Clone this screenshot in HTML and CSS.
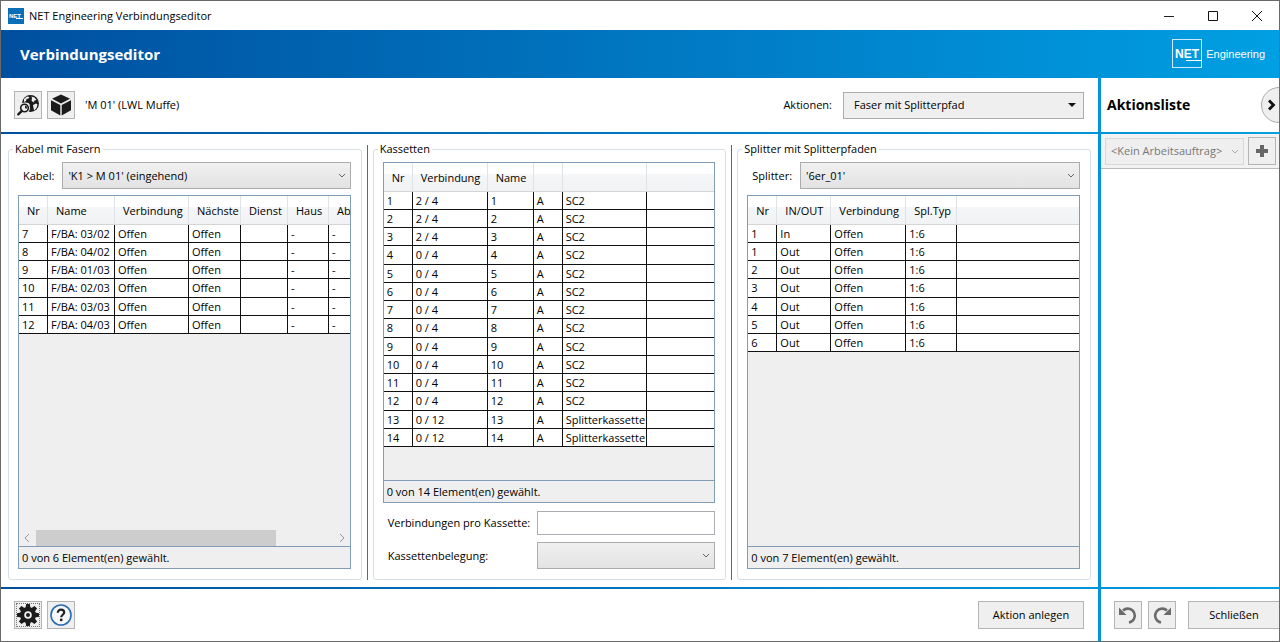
FILE: index.html
```html
<!DOCTYPE html>
<html lang="de">
<head>
  <meta charset="UTF-8" />
  <meta name="viewport" content="width=device-width, initial-scale=1.0" />
  <title>NET Engineering Verbindungseditor</title>
  <link rel="stylesheet" href="styles.css">
</head>
<body>
  <div class="titlebar">
    <svg class="app-icon" viewBox="0 0 16 16" width="16" height="16">
      <rect width="16" height="16" fill="#0a6fb8"/>
      <text x="1" y="10" class="app-icon-text">NET</text>
      <rect x="8" y="10" width="7" height="1" fill="#fff"/>
    </svg>
    <span class="titlebar-text">NET Engineering Verbindungseditor</span>
    <button class="window-button" aria-label="Minimieren">
      <svg viewBox="0 0 12 12" width="12" height="12"><path d="M1 6.5h10" stroke="#222" fill="none"/></svg>
    </button>
    <button class="window-button" aria-label="Maximieren">
      <svg viewBox="0 0 12 12" width="12" height="12"><path d="M1.5 1.5h9v9h-9z" stroke="#111" fill="none"/></svg>
    </button>
    <button class="window-button" aria-label="Fenster schließen">
      <svg viewBox="0 0 12 12" width="12" height="12"><path d="M1 1l10 10M11 1L1 11" stroke="#111" fill="none"/></svg>
    </button>
  </div>

  <header class="banner">
    <h1>Verbindungseditor</h1>
    <div class="brand">
      <svg viewBox="0 0 30 30" width="30" height="30">
        <rect x="0.5" y="0.5" width="29" height="28" fill="none" stroke="#cfeafa"/>
        <text x="3" y="19" class="brand-net">NET</text>
        <rect x="14" y="21" width="16" height="1" fill="#fff"/>
      </svg>
      <span>Engineering</span>
    </div>
  </header>

  <div class="workspace">
    <div class="toolbar">
      <button class="icon-button" aria-label="Lokalisieren">
        <svg viewBox="0 0 24 24" width="24" height="24">
          <circle cx="14.5" cy="10.5" r="8.5" fill="#1b1b1b"/>
          <path d="M8 6l3-2.500 2.500.5-1 1.500-2 .5-.5 2-2 1zM15.500 3.500l3 1 2 2.500-2 .5-1 2-2-2 .5-2zM9 9.500l3.500.5 1.500 2-1.500 2.500-2-1.500zM17 12l3-1.500 1.500 1-1 3.500-2.500 2.500z" fill="#efefef"/>
          <circle cx="8.500" cy="15" r="5.500" fill="#efefef"/>
          <circle cx="8.500" cy="15" r="3.800" fill="#efefef" stroke="#1b1b1b" stroke-width="1.600"/>
          <path d="M5.800 17.800L2.300 21.300" stroke="#1b1b1b" stroke-width="2.400" stroke-linecap="round"/>
          <path d="M9 12.500l2 1-.5 2.500-1.500-1z" fill="#1b1b1b"/>
        </svg>
      </button>
      <button class="icon-button" aria-label="Objekt">
        <svg viewBox="0 0 24 24" width="24" height="24" fill="#1b1b1b">
          <path d="M12 1.500l9 4.300-9 4.700-9-4.700z"/>
          <path d="M2 7.200l9.300 4.800v10.500L2 17.300z"/>
          <path d="M22 7.200L12.700 12v10.500L22 17.300z"/>
        </svg>
      </button>
      <span class="object-name">'M 01' (LWL Muffe)</span>
      <label for="aktionen">Aktionen:</label>
      <div class="combo combo-flat">
        <select id="aktionen"><option>Faser mit Splitterpfad</option></select>
        <svg viewBox="0 0 8 4" width="8" height="4"><path d="M0 0h8L4 4z" fill="#111"/></svg>
      </div>
    </div>

    <div class="side-head">
      <h2>Aktionsliste</h2>
      <button class="collapse" aria-label="Aktionsliste einklappen">
        <svg viewBox="0 0 10 12" width="10" height="12"><path d="M2 1.500L6.500 6 2 10.500" stroke="#111" stroke-width="2.800" fill="none"/></svg>
      </button>
    </div>

    <main class="panels">
      <fieldset class="panel">
        <legend>Kabel mit Fasern</legend>
        <div class="panel-select">
          <label for="kabel">Kabel:</label>
          <div class="combo">
            <select id="kabel"><option>'K1 &gt; M 01' (eingehend)</option></select>
            <svg viewBox="0 0 8 5" width="8" height="5"><path d="M1 1l3 3 3-3" stroke="#666" fill="none"/></svg>
          </div>
        </div>
        <div class="list">
          <div class="list-body">
            <table class="fasern">
              <colgroup><col class="w-nr"><col class="w-faser"><col class="w-verb"><col class="w-next"><col class="w-dienst"><col class="w-haus"><col></colgroup>
              <thead>
                <tr><th>Nr</th><th>Name</th><th>Verbindung</th><th>Nächste</th><th>Dienst</th><th>Haus</th><th>Ab</th></tr>
              </thead>
              <tbody>
                <tr><td>7</td><td>F/BA: 03/02</td><td>Offen</td><td>Offen</td><td></td><td>-</td><td>-</td></tr>
                <tr><td>8</td><td>F/BA: 04/02</td><td>Offen</td><td>Offen</td><td></td><td>-</td><td>-</td></tr>
                <tr><td>9</td><td>F/BA: 01/03</td><td>Offen</td><td>Offen</td><td></td><td>-</td><td>-</td></tr>
                <tr><td>10</td><td>F/BA: 02/03</td><td>Offen</td><td>Offen</td><td></td><td>-</td><td>-</td></tr>
                <tr><td>11</td><td>F/BA: 03/03</td><td>Offen</td><td>Offen</td><td></td><td>-</td><td>-</td></tr>
                <tr><td>12</td><td>F/BA: 04/03</td><td>Offen</td><td>Offen</td><td></td><td>-</td><td>-</td></tr>
              </tbody>
            </table>
          </div>
          <div class="scrollbar">
            <svg viewBox="0 0 6 10" width="6" height="10"><path d="M5 1L1 5l4 4" stroke="#999" fill="none"/></svg>
            <div class="scroll-track"><div class="scroll-thumb"></div></div>
            <svg viewBox="0 0 6 10" width="6" height="10"><path d="M1 1l4 4-4 4" stroke="#999" fill="none"/></svg>
          </div>
          <div class="list-status">0 von 6 Element(en) gewählt.</div>
        </div>
      </fieldset>

      <div class="splitter"></div>

      <fieldset class="panel">
        <legend>Kassetten</legend>
        <div class="list">
          <div class="list-body">
            <table>
              <colgroup><col class="w-nr"><col class="w-verb"><col class="w-name"><col class="w-seite"><col class="w-kassette"><col></colgroup>
              <thead>
                <tr><th>Nr</th><th>Verbindung</th><th>Name</th><th></th><th></th><th></th></tr>
              </thead>
              <tbody>
                <tr><td>1</td><td>2 / 4</td><td>1</td><td>A</td><td>SC2</td><td></td></tr>
                <tr><td>2</td><td>2 / 4</td><td>2</td><td>A</td><td>SC2</td><td></td></tr>
                <tr><td>3</td><td>2 / 4</td><td>3</td><td>A</td><td>SC2</td><td></td></tr>
                <tr><td>4</td><td>0 / 4</td><td>4</td><td>A</td><td>SC2</td><td></td></tr>
                <tr><td>5</td><td>0 / 4</td><td>5</td><td>A</td><td>SC2</td><td></td></tr>
                <tr><td>6</td><td>0 / 4</td><td>6</td><td>A</td><td>SC2</td><td></td></tr>
                <tr><td>7</td><td>0 / 4</td><td>7</td><td>A</td><td>SC2</td><td></td></tr>
                <tr><td>8</td><td>0 / 4</td><td>8</td><td>A</td><td>SC2</td><td></td></tr>
                <tr><td>9</td><td>0 / 4</td><td>9</td><td>A</td><td>SC2</td><td></td></tr>
                <tr><td>10</td><td>0 / 4</td><td>10</td><td>A</td><td>SC2</td><td></td></tr>
                <tr><td>11</td><td>0 / 4</td><td>11</td><td>A</td><td>SC2</td><td></td></tr>
                <tr><td>12</td><td>0 / 4</td><td>12</td><td>A</td><td>SC2</td><td></td></tr>
                <tr><td>13</td><td>0 / 12</td><td>13</td><td>A</td><td>Splitterkassette</td><td></td></tr>
                <tr><td>14</td><td>0 / 12</td><td>14</td><td>A</td><td>Splitterkassette</td><td></td></tr>
              </tbody>
            </table>
          </div>
          <div class="list-status">0 von 14 Element(en) gewählt.</div>
        </div>
        <div class="panel-form">
          <label for="anzahl">Verbindungen pro Kassette:</label>
          <input id="anzahl" type="text">
          <label for="belegung">Kassettenbelegung:</label>
          <div class="combo">
            <select id="belegung"><option></option></select>
            <svg viewBox="0 0 8 5" width="8" height="5"><path d="M1 1l3 3 3-3" stroke="#666" fill="none"/></svg>
          </div>
        </div>
      </fieldset>

      <div class="splitter"></div>

      <fieldset class="panel">
        <legend>Splitter mit Splitterpfaden</legend>
        <div class="panel-select">
          <label for="splitter">Splitter:</label>
          <div class="combo">
            <select id="splitter"><option>'6er_01'</option></select>
            <svg viewBox="0 0 8 5" width="8" height="5"><path d="M1 1l3 3 3-3" stroke="#666" fill="none"/></svg>
          </div>
        </div>
        <div class="list">
          <div class="list-body">
            <table>
              <colgroup><col class="w-nr"><col class="w-inout"><col class="w-verb"><col class="w-typ"><col></colgroup>
              <thead>
                <tr><th>Nr</th><th>IN/OUT</th><th>Verbindung</th><th>Spl.Typ</th><th></th></tr>
              </thead>
              <tbody>
                <tr><td>1</td><td>In</td><td>Offen</td><td>1:6</td><td></td></tr>
                <tr><td>1</td><td>Out</td><td>Offen</td><td>1:6</td><td></td></tr>
                <tr><td>2</td><td>Out</td><td>Offen</td><td>1:6</td><td></td></tr>
                <tr><td>3</td><td>Out</td><td>Offen</td><td>1:6</td><td></td></tr>
                <tr><td>4</td><td>Out</td><td>Offen</td><td>1:6</td><td></td></tr>
                <tr><td>5</td><td>Out</td><td>Offen</td><td>1:6</td><td></td></tr>
                <tr><td>6</td><td>Out</td><td>Offen</td><td>1:6</td><td></td></tr>
              </tbody>
            </table>
          </div>
          <div class="list-status">0 von 7 Element(en) gewählt.</div>
        </div>
      </fieldset>
    </main>

    <aside class="side-body">
      <div class="side-tools">
        <div class="combo combo-disabled">
          <select aria-label="Arbeitsauftrag" disabled><option>&lt;Kein Arbeitsauftrag&gt;</option></select>
          <svg viewBox="0 0 8 5" width="8" height="5"><path d="M1 1l3 3 3-3" stroke="#aaa" fill="none"/></svg>
        </div>
        <button class="icon-button" aria-label="Arbeitsauftrag hinzufügen">
          <svg viewBox="0 0 14 14" width="14" height="14"><path d="M7 1v12M1 7h12" stroke="#666" stroke-width="4"/></svg>
        </button>
      </div>
    </aside>

    <footer class="footer">
      <button class="icon-button focused" aria-label="Einstellungen">
        <svg viewBox="0 0 24 24" width="24" height="24">
          <g fill="#1b1b1b">
            <circle cx="12" cy="12" r="8"/>
            <path id="tooth" d="M9.500 5l.7-4h3.600l.7 4zM9.500 19l.7 4h3.600l.7-4z"/>
            <use href="#tooth" transform="rotate(45 12 12)"/>
            <use href="#tooth" transform="rotate(90 12 12)"/>
            <use href="#tooth" transform="rotate(135 12 12)"/>
          </g>
          <circle cx="12" cy="12" r="2.900" fill="#1b1b1b" stroke="#efefef" stroke-width="1.800"/>
        </svg>
      </button>
      <button class="icon-button" aria-label="Hilfe">
        <svg viewBox="0 0 24 24" width="24" height="24" fill="none">
          <circle cx="12" cy="12" r="10" stroke="#2a6cb0" stroke-width="1.600" fill="#f6f8fa"/>
          <path d="M8.800 9.800C8.800 7.800 10.100 6.600 12 6.600s3.200 1.200 3.200 2.900c0 2.200-3 2.300-3 4.800" stroke="#222" stroke-width="2.200"/>
          <circle cx="12.200" cy="16.900" r="1.400" fill="#222"/>
        </svg>
      </button>
      <button class="text-button push">Aktion anlegen</button>
    </footer>

    <div class="side-footer">
      <button class="icon-button" aria-label="Rückgängig">
        <svg viewBox="0 0 24 24" width="24" height="24">
          <path d="M7 7.500A7 7 0 1 1 13 19.500" stroke="#6b6b6b" stroke-width="2.600" fill="none"/>
          <path d="M3 4.500v7.500h7.500z" fill="#6b6b6b"/>
        </svg>
      </button>
      <button class="icon-button" aria-label="Wiederholen">
        <svg viewBox="0 0 24 24" width="24" height="24">
          <path d="M17 7.500A7 7 0 1 0 11 19.500" stroke="#6b6b6b" stroke-width="2.600" fill="none"/>
          <path d="M21 4.500v7.500h-7.500z" fill="#6b6b6b"/>
        </svg>
      </button>
      <button class="text-button close-button">Schließen</button>
    </div>
  </div>
</body>
</html>
```
FILE: styles.css
```css
* {
  box-sizing: border-box;
}

body {
  margin: 0;
  min-height: 100vh;
  display: flex;
  flex-direction: column;
  border: 1px solid #696969;
  background-color: #fff;
  color: #000;
  font-family: 'Open Sans', 'Noto Sans', sans-serif;
  font-size: 11px;
  line-height: 14px;
  overflow: hidden;
}

button, select, input {
  font: inherit;
  color: inherit;
}

svg {
  display: block;
  flex: none;
}

/* title bar */
.titlebar {
  height: 29px;
  display: flex;
  align-items: center;
  padding-left: 7px;
}

.app-icon-text {
  font: bold 6px 'Liberation Sans', sans-serif;
  fill: #fff;
}

.titlebar-text {
  margin-left: 5px;
  margin-right: auto;
}

.window-button {
  width: 44px;
  height: 29px;
  padding: 0;
  border: none;
  background: none;
  display: flex;
  align-items: center;
  justify-content: center;
}

/* banner */
.banner {
  height: 48px;
  display: flex;
  align-items: center;
  justify-content: space-between;
  padding: 0 14px 0 19px;
  background: linear-gradient(90deg, #004f9f, #009fe3);
  color: #fff;
}

h1 {
  margin: 0;
  font-size: 15px;
  line-height: 20px;
}

.brand {
  display: flex;
  align-items: center;
  gap: 4px;
  font-family: 'Liberation Sans', sans-serif;
}

.brand-net {
  font: bold 12px 'Liberation Sans', sans-serif;
  fill: #fff;
}

/* the gradient shows through the grid gaps as the dividing lines */
.workspace {
  flex: 1;
  display: grid;
  grid-template-columns: minmax(0, 1fr) 178px;
  grid-template-rows: 54px minmax(0, 1fr) 52px;
  gap: 2px 3px;
  background: linear-gradient(90deg, #004f9f, #009fe3);
}

.workspace > * {
  background-color: #fff;
}

.toolbar, .footer {
  display: flex;
  align-items: center;
  gap: 5px;
  padding: 0 14px 0 13px;
}

.object-name {
  margin-left: 5px;
  margin-right: auto;
}

.icon-button {
  flex: none;
  width: 28px;
  height: 28px;
  padding: 0;
  border: 1px solid #b4b4b4;
  background-color: #efefef;
  display: flex;
  align-items: center;
  justify-content: center;
}

.focused {
  outline: 1px dotted #777;
  outline-offset: -3px;
}

.text-button {
  width: 106px;
  height: 28px;
  padding: 0;
  border: 1px solid #b4b4b4;
  background-color: #efefef;
}

.push {
  margin-left: auto;
}

/* drop-downs */
.combo {
  flex: 1;
  display: grid;
  align-items: center;
}

.combo select {
  grid-area: 1 / 1;
  width: 100%;
  height: 27px;
  padding: 0 20px 0 5px;
  appearance: none;
  border: 1px solid #acacac;
  border-radius: 0;
  background: linear-gradient(#f0f0f0, #e3e3e3);
}

.combo svg {
  grid-area: 1 / 1;
  justify-self: end;
  margin-right: 5px;
  pointer-events: none;
}

.combo-flat {
  flex: 0 0 241px;
  margin-left: 6px;
}

.combo-flat select {
  padding-left: 10px;
  background: #efefef;
}

.combo-flat svg {
  margin-right: 8px;
}

.combo-disabled select {
  border-color: #d9d9d9;
  background: #efefef;
  color: #777;
  opacity: 1;
}

/* panels */
.panels {
  display: grid;
  grid-template-columns: minmax(0, 1fr) 1px minmax(0, 1fr) 1px minmax(0, 1fr);
  gap: 5px;
  padding: 8px 7px 7px;
}

.panel {
  min-width: 0;
  margin: 0;
  padding: 6px 10px 10px 9px;
  border: 1px solid #d5dfe5;
  border-radius: 3px;
  display: flex;
  flex-direction: column;
}

legend {
  margin-left: -5px;
  padding: 0 2px;
}

.splitter {
  margin-top: 3px;
  background-color: #666;
}

.panel-select {
  display: flex;
  align-items: center;
  gap: 8px;
  margin-bottom: 6px;
  padding-left: 5px;
}

.panel-form {
  display: grid;
  grid-template-columns: 150px 1fr;
  align-items: center;
  gap: 7px 4px;
  margin-top: 8px;
  white-space: nowrap;
}

.panel-form label {
  padding-left: 5px;
}

.panel-form input {
  width: 100%;
  height: 24px;
  padding: 0 4px;
  border: 1px solid #abadb3;
}

.list {
  flex: 1;
  display: flex;
  flex-direction: column;
  border: 1px solid #7f9db9;
  background-color: #efefef;
}

.list-body {
  flex: 1;
  overflow: hidden;
}

.list-status {
  height: 22px;
  padding: 4px 3px;
  border-top: 1px solid #7f9db9;
}

table {
  width: 100%;
  table-layout: fixed;
  border-collapse: separate;
  border-spacing: 0;
}

th {
  height: 29px;
  padding: 1px 0 0 8px;
  border-right: 1px solid #dfe2e6;
  border-bottom: 1px solid #d5d5d5;
  background: linear-gradient(#fff 40%, #f5f6f8 40%, #f1f2f4);
  font-weight: normal;
  text-align: left;
  white-space: nowrap;
}

td {
  height: 18px;
  padding: 0 0 0 3px;
  border-right: 1px solid #111;
  border-bottom: 1px solid #111;
  background-color: #fff;
  white-space: nowrap;
}

tr:nth-child(4n) td {
  height: 19px;
}

th:last-child, td:last-child {
  border-right: none;
}

.w-nr { width: 29px; }
.w-faser { width: 67px; }
.w-verb { width: 75px; }
.w-next { width: 52px; }
.w-dienst { width: 47px; }
.w-haus { width: 41px; }
.w-name { width: 46px; }
.w-seite { width: 29px; }
.w-kassette { width: 84px; }
.w-inout { width: 54px; }
.w-typ { width: 51px; }

.fasern .w-verb { width: 74px; }

.scrollbar {
  height: 16px;
  display: flex;
  align-items: center;
  gap: 6px;
  padding: 0 5px;
}

.scroll-track {
  flex: 1;
}

.scroll-thumb {
  width: 81%;
  height: 16px;
  background-color: #cdcdcd;
}

/* action list */
.side-head {
  display: flex;
  align-items: center;
  padding-left: 6px;
  overflow: hidden;
}

h2 {
  margin: 0;
  font-size: 14px;
  line-height: 20px;
}

.collapse {
  flex: none;
  width: 36px;
  height: 36px;
  margin-left: auto;
  margin-right: -18px;
  padding: 0 0 0 5px;
  border: 1px solid #aaa;
  border-radius: 50%;
  background-color: #efefef;
}

.side-tools {
  height: 35px;
  display: flex;
  align-items: center;
  gap: 4px;
  padding: 0 3px 0 4px;
  border-bottom: 1px solid #bbb;
  background-color: #f2f2f2;
}

.side-footer {
  display: flex;
  align-items: center;
  gap: 6px;
  padding-left: 13px;
  overflow: hidden;
}

.close-button {
  flex: none;
  width: 92px;
  margin-left: 6px;
}
```
